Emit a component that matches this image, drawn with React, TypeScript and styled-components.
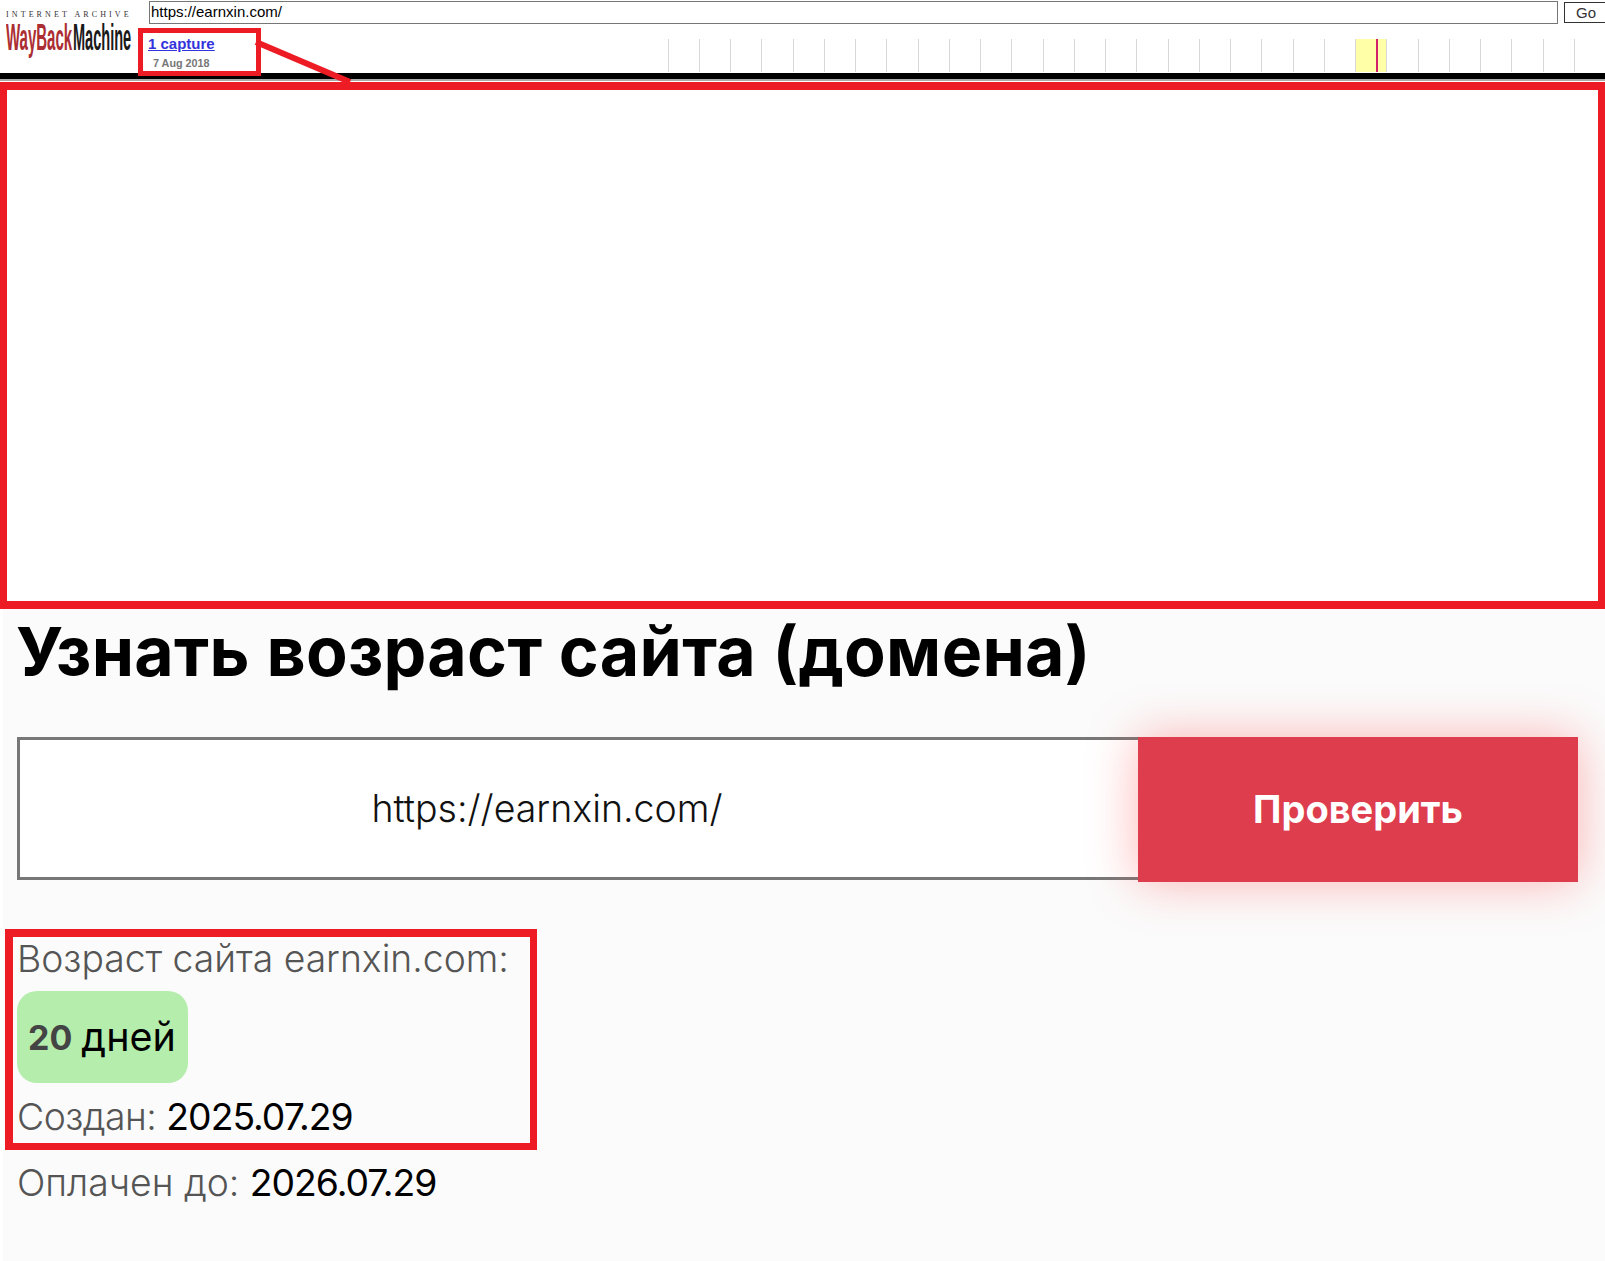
import React from 'react';
import styled, { createGlobalStyle } from 'styled-components';

const GlobalStyle = createGlobalStyle`
    html, body {
        margin: 0;
        padding: 0;
        background: #fff;
    }
    #root {
        min-height: 1261px;
    }
`;

const ANNOTATION = '#ed1c24';
const PAGE_FONT = 'Inter, "Noto Sans", sans-serif';
const ARIAL = '"Liberation Sans", Arial, sans-serif';

const Page = styled.div`
    position: relative;
    width: 1605px;
    height: 1261px;
    overflow: hidden;
`;

/* archive toolbar */
const Toolbar = styled.header`
    display: flex;
    height: 73px;
    background: #fff;
    border-bottom: 6px solid #000;
    box-shadow: 0 2px 0 #aaa;
`;

const Logo = styled.div`
    width: 149px;
    flex-shrink: 0;
    padding: 10px 0 0 6px;
    box-sizing: border-box;
`;

const LogoCaption = styled.div`
    font: 8px/9px 'Liberation Serif', serif;
    letter-spacing: 3.1px;
    color: #333;
    white-space: nowrap;
`;

const LogoWordmark = styled.div`
    display: flex;
    margin-top: 5px;
    height: 32px;
`;

const LogoWord = styled.span<{ $width: number; $scaleX: number; $color: string }>`
    display: block;
    width: ${({ $width }) => $width}px;
    height: 22px;
    font: bold 30px/22px ${ARIAL};
    color: ${({ $color }) => $color};
    white-space: nowrap;
    transform-origin: left top;
    transform: scale(${({ $scaleX }) => $scaleX}, 1.25);
`;

const ToolbarMain = styled.div`
    flex: 1;
    min-width: 0;
    display: flex;
    flex-direction: column;
`;

const UrlRow = styled.div`
    display: flex;
    align-items: flex-start;
    gap: 6px;
    padding-top: 1px;
    height: 24px;
`;

const UrlInput = styled.input`
    width: 1409px;
    height: 23px;
    flex-shrink: 0;
    box-sizing: border-box;
    border: 1px solid #767676;
    padding: 0 1px 2px;
    font: 15px ${ARIAL};
    color: #000;
    outline: none;
`;

const GoButton = styled.button`
    width: 48px;
    height: 21px;
    margin-top: 1px;
    flex-shrink: 0;
    box-sizing: border-box;
    border: 1px solid #333;
    background: #fff;
    padding: 0 0 1px 11px;
    text-align: left;
    font: 15px ${ARIAL};
    color: #333;
`;

const CaptureRow = styled.div`
    display: flex;
    justify-content: space-between;
`;

const CaptureInfo = styled.div`
    padding-top: 11px;
    margin-left: -1px;
`;

const CaptureLink = styled.a`
    display: block;
    font: bold 15px/16px ${ARIAL};
    color: #3333dd;
    text-decoration: underline;
`;

const CaptureDate = styled.div`
    margin: 5px 0 0 5px;
    font: bold 10.8px/12px ${ARIAL};
    color: #777;
`;

const Histogram = styled.div`
    display: flex;
    height: 33px;
    margin-top: 14px;
`;

const HistogramYear = styled.div<{ $active?: boolean }>`
    position: relative;
    width: 31.25px;
    border-left: 1px solid #d8d8d8;
    box-sizing: border-box;
    background: ${({ $active }) => ($active ? '#ffffa8' : 'transparent')};
`;

const HistogramMark = styled.div`
    position: absolute;
    left: 19.5px;
    top: 0;
    bottom: 0;
    width: 2.5px;
    background: #d3206a;
`;

/* empty frame where the archive banner used to be */
const BannerFrame = styled.div`
    height: 527px;
    margin-top: 3px;
    box-sizing: border-box;
    background: #fff;
    border: solid ${ANNOTATION};
    border-width: 8px 7px;
`;

/* red callout drawn over the toolbar */
const CaptureCallout = styled.div`
    position: absolute;
    left: 138px;
    top: 28px;
    width: 123px;
    height: 48px;
    box-sizing: border-box;
    border: 5px solid ${ANNOTATION};
`;

const CalloutLine = styled.svg`
    position: absolute;
    left: 250px;
    top: 35px;
`;

/* site content */
const Content = styled.main`
    margin-left: 3px;
    padding: 0 14px;
    height: 652px;
    background: #fbfbfb;
`;

const Title = styled.h1`
    margin: 0 0 0 -1px;
    padding-top: 1px;
    font: 700 68px/82px ${PAGE_FONT};
    letter-spacing: 0.3px;
    color: #000;
    white-space: nowrap;
`;

const CheckForm = styled.form`
    display: flex;
    align-items: flex-start;
    margin-top: 45px;
`;

const DomainInput = styled.input`
    width: 1121px;
    height: 143px;
    box-sizing: border-box;
    border: 3px solid #777;
    border-right: none;
    background: #fff;
    padding: 0 64px 0 0;
    text-align: center;
    font: 300 37.5px ${PAGE_FONT};
    color: #111;
    outline: none;
`;

const CheckButton = styled.button`
    position: relative;
    width: 440px;
    height: 145px;
    flex-shrink: 0;
    border: none;
    padding: 0 0 2px;
    background: #de3d4e;
    box-shadow: 0 0 50px rgba(255, 90, 90, 0.45);
    font: 700 38px ${PAGE_FONT};
    color: #fff;
`;

const ResultBox = styled.section`
    width: 532px;
    height: 221px;
    margin: 47px 0 0 -12px;
    padding: 0 0 0 4px;
    box-sizing: border-box;
    border: 8px solid ${ANNOTATION};
    border-width: 8px 7px 7px 8px;
`;

const InfoLine = styled.div<{ $tight?: boolean }>`
    font: 300 37.3px/44px ${PAGE_FONT};
    letter-spacing: ${({ $tight }) => ($tight ? '-0.5px' : 'normal')};
    color: #555;
    white-space: nowrap;
`;

const InfoValue = styled.span`
    font-weight: 400;
    letter-spacing: -1px;
    color: #000;
`;

const AgeBadge = styled.div`
    display: flex;
    align-items: center;
    gap: 9px;
    width: 171px;
    height: 92px;
    margin: 10px 0 12px;
    padding-left: 11px;
    box-sizing: border-box;
    border-radius: 20px;
    background: #b5edac;
    font: 400 39.5px ${PAGE_FONT};
    color: #000;
`;

const AgeNumber = styled.b`
    font-size: 34px;
    font-weight: 700;
    color: #444;
`;

const PaidLine = styled(InfoLine)`
    margin-top: 11px;
`;

const YEARS = Array.from({ length: 30 }, (_, i) => i);
const ACTIVE_YEAR = 22;

export default function App() {
    return (
        <Page>
            <GlobalStyle />
            <Toolbar>
                <Logo>
                    <LogoCaption>INTERNET ARCHIVE</LogoCaption>
                    <LogoWordmark>
                        <LogoWord $width={67} $scaleX={0.5} $color="#ab2e33">WayBack</LogoWord>
                        <LogoWord $width={58} $scaleX={0.485} $color="#1a1a1a">Machine</LogoWord>
                    </LogoWordmark>
                </Logo>
                <ToolbarMain>
                    <UrlRow>
                        <UrlInput readOnly value="https://earnxin.com/" />
                        <GoButton type="button">Go</GoButton>
                    </UrlRow>
                    <CaptureRow>
                        <CaptureInfo>
                            <CaptureLink>1 capture</CaptureLink>
                            <CaptureDate>7 Aug 2018</CaptureDate>
                        </CaptureInfo>
                        <Histogram>
                            {YEARS.map((year) => (
                                <HistogramYear key={year} $active={year === ACTIVE_YEAR}>
                                    {year === ACTIVE_YEAR && <HistogramMark />}
                                </HistogramYear>
                            ))}
                        </Histogram>
                    </CaptureRow>
                </ToolbarMain>
            </Toolbar>

            <BannerFrame />

            <Content>
                <Title>Узнать возраст сайта (домена)</Title>
                <CheckForm>
                    <DomainInput readOnly value="https://earnxin.com/" />
                    <CheckButton type="button">Проверить</CheckButton>
                </CheckForm>
                <ResultBox>
                    <InfoLine>Возраст сайта earnxin.com:</InfoLine>
                    <AgeBadge>
                        <AgeNumber>20</AgeNumber> дней
                    </AgeBadge>
                    <InfoLine $tight>
                        Создан: <InfoValue>2025.07.29</InfoValue>
                    </InfoLine>
                </ResultBox>
                <PaidLine>
                    Оплачен до: <InfoValue>2026.07.29</InfoValue>
                </PaidLine>
            </Content>

            <CaptureCallout />
            <CalloutLine width="110" height="55" viewBox="0 0 110 55">
                <line x1="6" y1="7" x2="100" y2="47" stroke={ANNOTATION} strokeWidth="6" />
            </CalloutLine>
        </Page>
    );
}
